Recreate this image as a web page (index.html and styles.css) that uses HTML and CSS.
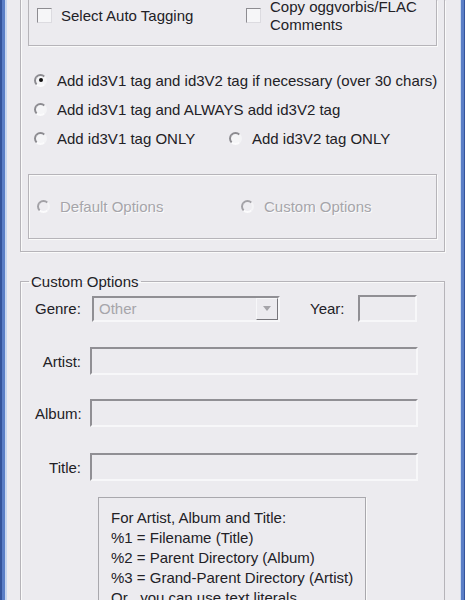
FILE: index.html
```html
<!DOCTYPE html>
<html>
<head>
<meta charset="utf-8">
<link rel="stylesheet" href="styles.css">
</head>
<body>
<div class="frame">
  <div class="group-outer">
    <div class="box-top">
      <label class="check-item first">
        <span class="checkbox"></span>
        <span class="check-text">Select Auto Tagging</span>
      </label>
      <label class="check-item second">
        <span class="checkbox"></span>
        <span class="check-text two-line">Copy oggvorbis/FLAC<br>Comments</span>
      </label>
    </div>

    <div class="radio-list">
      <div class="radio-row">
        <span class="radio checked"></span>
        <span class="radio-text">Add id3V1 tag and id3V2 tag if necessary (over 30 chars)</span>
      </div>
      <div class="radio-row">
        <span class="radio"></span>
        <span class="radio-text">Add id3V1 tag and ALWAYS add id3V2 tag</span>
      </div>
      <div class="radio-row">
        <span class="radio-pair">
          <span class="radio"></span>
          <span class="radio-text">Add id3V1 tag ONLY</span>
        </span>
        <span class="radio-pair second-pair">
          <span class="radio"></span>
          <span class="radio-text">Add id3V2 tag ONLY</span>
        </span>
      </div>
    </div>

    <div class="box-options">
      <span class="opt-pair">
        <span class="radio disabled"></span>
        <span class="disabled-text">Default Options</span>
      </span>
      <span class="opt-pair custom-pair">
        <span class="radio disabled"></span>
        <span class="disabled-text">Custom Options</span>
      </span>
    </div>
  </div>

  <fieldset class="custom">
    <legend class="custom-legend">Custom Options</legend>
    <div class="genre-row">
      <span class="genre-label">Genre:</span>
      <span class="combo">
        <span class="combo-value">Other</span>
        <span class="combo-btn"><span class="arrow"></span></span>
      </span>
      <span class="year-label">Year:</span>
      <span class="field year-field"></span>
    </div>
    <div class="field-row artist-row">
      <span class="field-label">Artist:</span>
      <span class="field wide"></span>
    </div>
    <div class="field-row album-row">
      <span class="field-label album-label">Album:</span>
      <span class="field wide"></span>
    </div>
    <div class="field-row title-row">
      <span class="field-label">Title:</span>
      <span class="field wide"></span>
    </div>
    <div class="info">
      <div>For Artist, Album and Title:</div>
      <div>%1 = Filename (Title)</div>
      <div>%2 = Parent Directory (Album)</div>
      <div>%3 = Grand-Parent Directory (Artist)</div>
      <div>Or , you can use text literals</div>
    </div>
  </fieldset>
</div>
</body>
</html>
```

FILE: styles.css
```css
html, body {
  margin: 0;
  padding: 0;
  height: 600px;
  overflow: hidden;
}

body {
  font-family: "Liberation Sans", Arial, sans-serif;
  font-size: 15px;
  color: #222126;
  background: #ecebef;
}

.frame {
  height: 600px;
  box-sizing: border-box;
  padding: 0 5px 0 7px;
  background:
    linear-gradient(to right, #34549c 0 2px, #5a7ec6 2px 5px, #c7d6ef 5px 7px, transparent 7px),
    linear-gradient(to left, #34549c 0 1px, #5a7ec6 1px 4px, #cad8ef 4px 5px, transparent 5px),
    #ecebef;
}

/* ---------- upper group ---------- */
.group-outer {
  margin: 0 15px 0 13px;
  height: 252px;
  box-sizing: border-box;
  border: 1px solid #b6b4b9;
  border-top: none;
  box-shadow: 1px 1px 0 #fafafa, inset 1px 0 0 #fafafa;
  padding: 0 7px;
}

.box-top {
  height: 46px;
  box-sizing: border-box;
  border: 1px solid #b6b4b9;
  border-top: none;
  box-shadow: 1px 1px 0 #fafafa;
  display: flex;
  align-items: center;
  padding: 0 0 14px 8px;
}

.check-item {
  display: flex;
  align-items: center;
}

.check-item.first {
  width: 209px;
}

.checkbox {
  width: 13px;
  height: 13px;
  border: 1px solid;
  border-color: #8d8c91 #dcdbe0 #dcdbe0 #8d8c91;
  background: #f6f6f8;
  margin-right: 9px;
  flex: none;
}

.check-text {
  line-height: 18px;
  white-space: nowrap;
}

.two-line {
  margin-top: 0;
}

.radio-list {
  margin-top: 20px;
  display: flex;
  flex-direction: column;
  gap: 1px;
}

.radio-row {
  height: 28px;
  display: flex;
  align-items: center;
  padding-left: 6px;
  white-space: nowrap;
}

.radio-text {
  white-space: nowrap;
}

.radio {
  width: 9px;
  height: 9px;
  border-radius: 50%;
  border: 2px solid;
  border-color: #8c8b90 #f4f4f6 #fbfbfc #8c8b90;
  background: #f5f5f7;
  margin-right: 10px;
  flex: none;
  display: flex;
  align-items: center;
  justify-content: center;
}

.radio.checked::after {
  content: "";
  width: 4px;
  height: 4px;
  border-radius: 50%;
  background: #111;
}

.radio-pair {
  display: flex;
  align-items: center;
}

.radio-pair:first-child {
  width: 195px;
}

.box-options {
  margin-top: 22px;
  height: 65px;
  box-sizing: border-box;
  border: 1px solid #b6b4b9;
  box-shadow: 1px 1px 0 #fafafa, inset 1px 1px 0 #fafafa;
  display: flex;
  align-items: center;
  padding: 0 0 0 8px;
}

.opt-pair {
  display: flex;
  align-items: center;
}

.opt-pair:first-child {
  width: 204px;
}

.radio.disabled {
  border-color: #a2a1a6 #f4f4f6 #fbfbfc #a2a1a6;
  background: #eeedf1;
}

.disabled-text {
  color: #a6a5aa;
  text-shadow: 1px 1px 0 #fbfbfc;
}

/* ---------- custom options ---------- */
.custom {
  margin: 21px 15px 0 13px;
  padding: 0 0 0 14px;
  border: 1px solid #b6b4b9;
  box-shadow: inset 1px 1px 0 #fafafa;
  min-width: 0;
  height: 400px;
}

.custom-legend {
  padding: 0 2px;
  margin-left: -6px;
  line-height: 17px;
}

.genre-row {
  margin-top: 5px;
  display: flex;
  align-items: center;
  height: 27px;
}

.genre-label {
  width: 57px;
}

.combo {
  width: 188px;
  height: 26px;
  box-sizing: border-box;
  border: 2px solid;
  border-color: #908f94 #f7f7f9 #f7f7f9 #908f94;
  display: flex;
  align-items: center;
  justify-content: space-between;
}

.combo-value {
  color: #a6a5aa;
  padding-left: 5px;
}

.combo-btn {
  width: 22px;
  height: 22px;
  box-sizing: border-box;
  border: 1px solid;
  border-color: #f7f7f9 #77767b #77767b #f7f7f9;
  display: flex;
  align-items: center;
  justify-content: center;
  background: #ecebef;
}

.arrow {
  width: 0;
  height: 0;
  border-left: 4px solid transparent;
  border-right: 4px solid transparent;
  border-top: 5px solid #a5a4a9;
}

.year-label {
  margin-left: 30px;
  width: 48px;
}

.field {
  display: block;
  box-sizing: border-box;
  border: 2px solid;
  border-color: #908f94 #f7f7f9 #f7f7f9 #908f94;
  background: #ecebef;
}

.year-field {
  width: 59px;
  height: 27px;
}

.field-row {
  display: flex;
  align-items: center;
  height: 28px;
}

.artist-row {
  margin-top: 25px;
}

.album-row {
  margin-top: 24px;
}

.title-row {
  margin-top: 26px;
}

.field-label {
  width: 55px;
  box-sizing: border-box;
  text-align: right;
  padding-right: 9px;
  white-space: nowrap;
}

.album-label {
  padding-right: 13px;
}

.wide {
  width: 328px;
  height: 28px;
}

.info {
  margin: 16px 0 0 63px;
  width: 268px;
  box-sizing: border-box;
  border: 1px solid #a9a8ad;
  box-shadow: 1px 1px 0 #fafafa;
  padding: 10px 0 0 12px;
  line-height: 20px;
  height: 120px;
}
```
